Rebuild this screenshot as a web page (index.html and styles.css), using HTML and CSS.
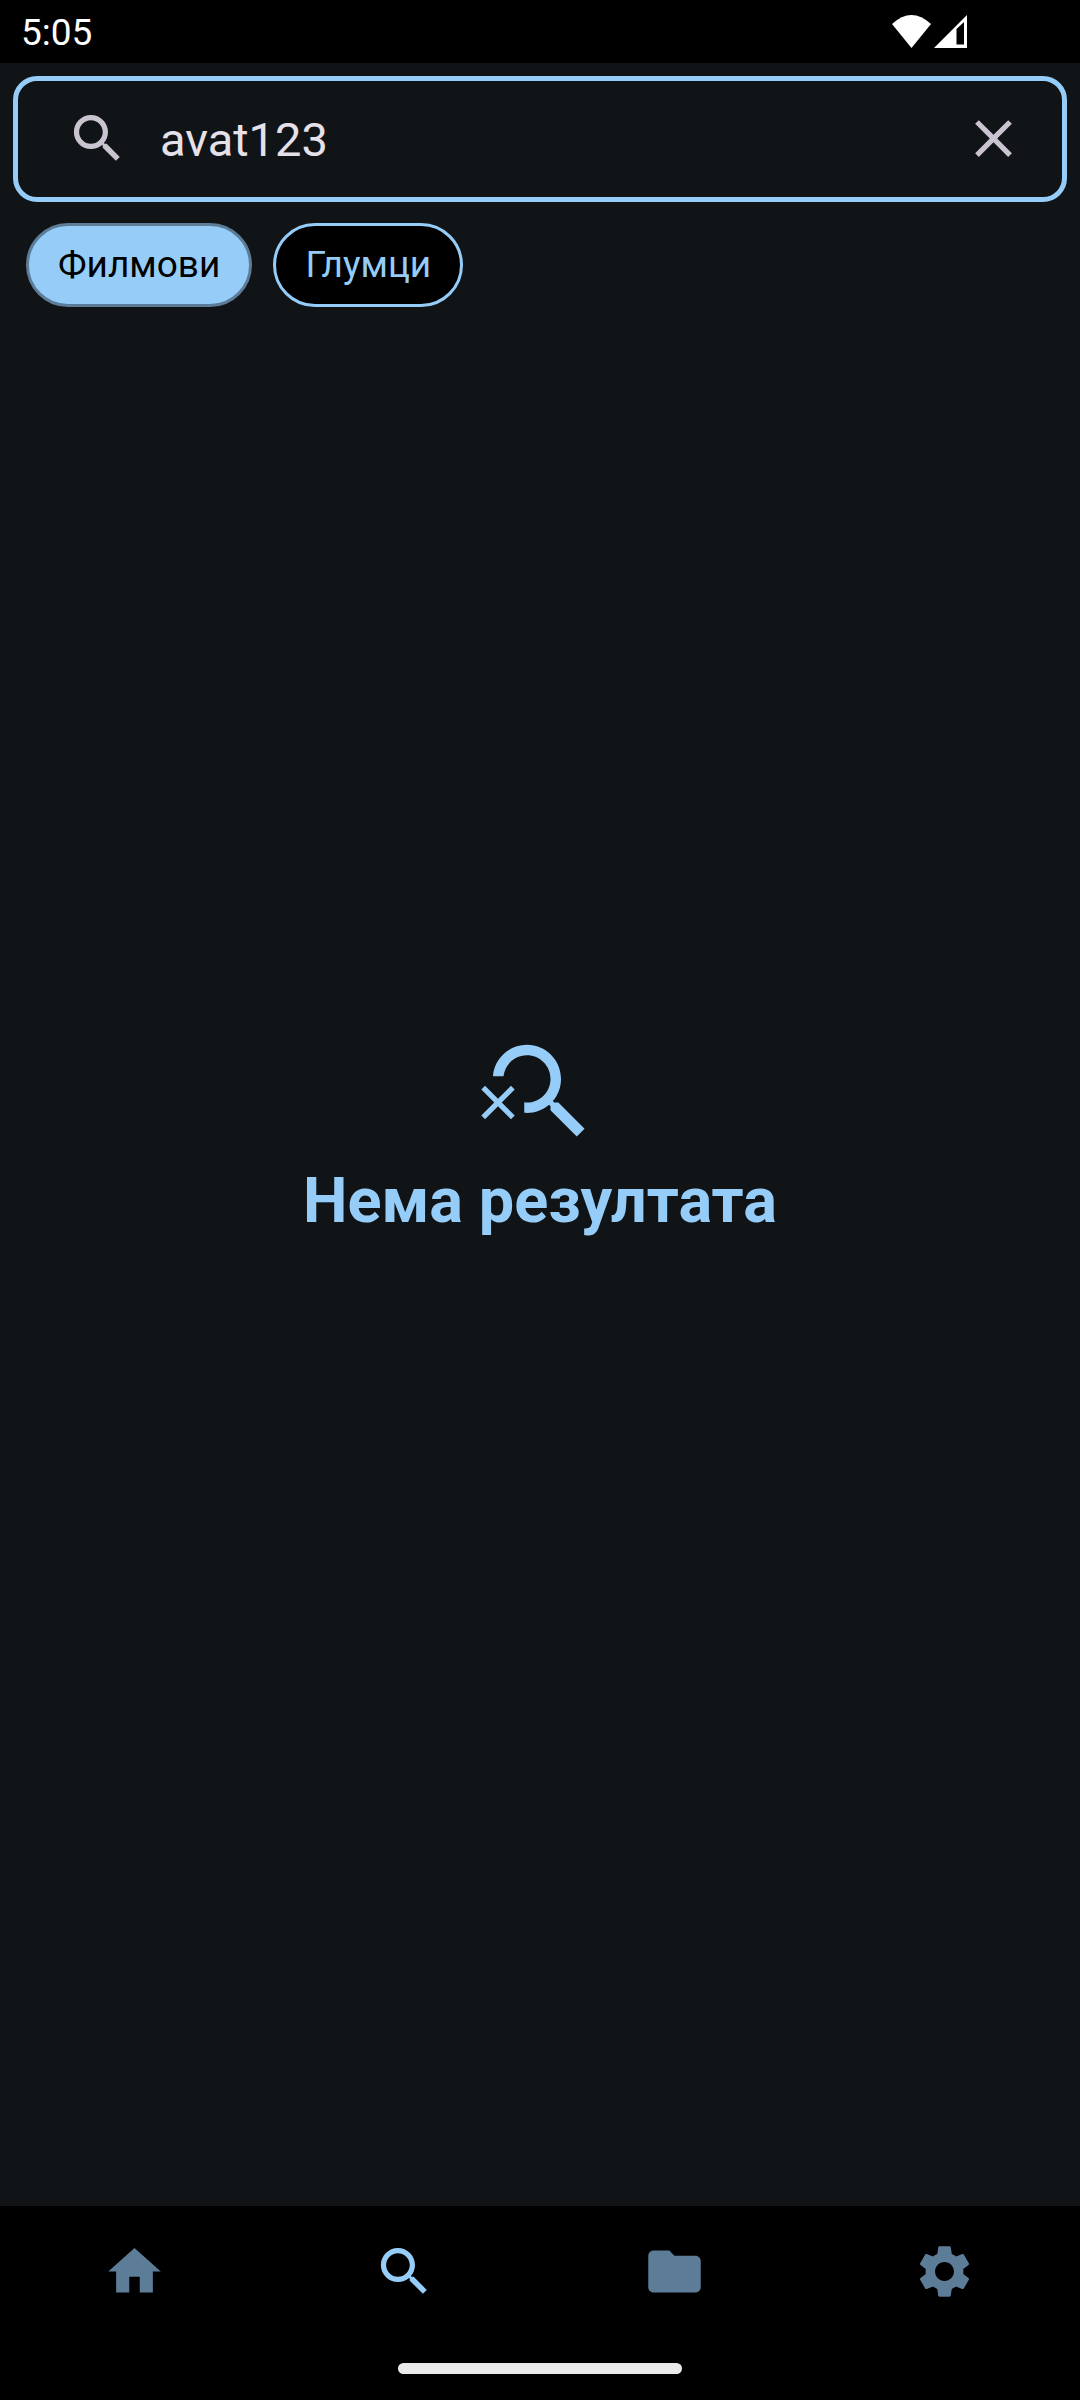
FILE: index.html
```html
<!DOCTYPE html>
<html lang="sr">
<head>
<meta charset="utf-8">
<meta name="viewport" content="width=device-width, initial-scale=1">
<title>Претрага</title>
<link rel="stylesheet" href="styles.css">
</head>
<body>
<div class="app">
  <header class="status">
    <time class="clock">5:05</time>
    <div class="signals">
      <svg class="wifi" viewBox="0 0 39 33" aria-hidden="true"><path d="M0 9Q19.500-9 39 9L19.500 33z"/></svg>
      <svg class="cell" viewBox="0 0 33 33" aria-hidden="true"><path fill-rule="evenodd" d="M33 0v33H0zM22.500 14v15.500H30V7z"/></svg>
    </div>
  </header>

  <main class="content">
    <section class="finder">
      <form class="search" role="search">
        <label class="search-label" for="query">
          <svg class="icon" viewBox="0 0 24 24" role="img" aria-label="Претрага"><path d="M15.500 14h-.79l-.28-.27C15.410 12.590 16 11.110 16 9.500 16 5.910 13.090 3 9.500 3S3 5.910 3 9.500 5.910 16 9.500 16c1.610 0 3.090-.59 4.230-1.570l.27.28v.79l5 4.990L20.490 19l-4.990-5zm-6 0C7.010 14 5 11.990 5 9.500S7.010 5 9.500 5 14 7.010 14 9.500 11.990 14 9.500 14z"/></svg>
        </label>
        <input class="query" id="query" type="text" value="avat123">
        <button class="clear" type="reset" aria-label="Обриши">
          <svg class="icon" viewBox="0 0 24 24" aria-hidden="true"><path d="M19 6.410 17.590 5 12 10.590 6.410 5 5 6.410 10.590 12 5 17.590 6.410 19 12 13.410 17.590 19 19 17.590 13.410 12z"/></svg>
        </button>
      </form>
      <div class="chips">
        <button class="chip chip-selected" type="button" aria-pressed="true">Филмови</button>
        <button class="chip" type="button" aria-pressed="false">Глумци</button>
      </div>
    </section>

    <section class="empty">
      <svg class="empty-icon" viewBox="0 0 24 24" aria-hidden="true"><path d="M15.500 14h-.79l-.28-.27C15.410 12.590 16 11.110 16 9.500 16 5.910 13.090 3 9.500 3 6.080 3 3.280 5.640 3.030 9h2.020C5.300 6.750 7.180 5 9.500 5 11.990 5 14 7.010 14 9.500S11.990 14 9.500 14c-.17 0-.33-.03-.5-.05v2.020c.17.02.33.03.5.03 1.610 0 3.090-.59 4.230-1.570l.27.28v.79l5 4.990L20.490 19l-4.990-5z"/><path d="M6.470 10.820 4 13.290l-2.470-2.470-.71.71L3.290 14 .82 16.470l.71.71L4 14.710l2.470 2.470.71-.71L4.710 14l2.470-2.470z"/></svg>
      <h1 class="empty-title">Нема резултата</h1>
    </section>
  </main>

  <footer class="bottom">
    <nav class="tabs">
      <a class="tab" href="#home" aria-label="Почетна"><svg class="icon" viewBox="0 0 24 24" aria-hidden="true"><path d="M10 20v-6h4v6h5v-8h3L12 3 2 12h3v8z"/></svg></a>
      <a class="tab tab-active" href="#search" aria-label="Претрага" aria-current="page"><svg class="icon" viewBox="0 0 24 24" aria-hidden="true"><path d="M15.500 14h-.79l-.28-.27C15.410 12.590 16 11.110 16 9.500 16 5.910 13.090 3 9.500 3S3 5.910 3 9.500 5.910 16 9.500 16c1.610 0 3.090-.59 4.230-1.570l.27.28v.79l5 4.990L20.490 19l-4.990-5zm-6 0C7.010 14 5 11.990 5 9.500S7.010 5 9.500 5 14 7.010 14 9.500 11.990 14 9.500 14z"/></svg></a>
      <a class="tab" href="#library" aria-label="Колекција"><svg class="icon" viewBox="0 0 24 24" aria-hidden="true"><path d="M10 4H4c-1.100 0-1.990.9-1.990 2L2 18c0 1.100.9 2 2 2h16c1.100 0 2-.9 2-2V8c0-1.100-.9-2-2-2h-8l-2-2z"/></svg></a>
      <a class="tab" href="#settings" aria-label="Подешавања"><svg class="icon" viewBox="0 0 24 24" aria-hidden="true"><path d="M19.140 12.940c.04-.3.06-.61.06-.94 0-.32-.02-.64-.07-.94l2.030-1.580c.18-.14.23-.41.12-.61l-1.920-3.320c-.12-.22-.37-.29-.59-.22l-2.390.96c-.5-.38-1.030-.7-1.620-.94L14.400 2.810c-.04-.24-.24-.41-.48-.41h-3.840c-.24 0-.43.17-.47.41L9.250 5.350c-.59.24-1.130.57-1.620.94l-2.390-.96c-.22-.08-.47 0-.59.22L2.740 8.870c-.12.21-.08.47.12.61l2.030 1.580c-.05.3-.09.63-.09.94s.02.64.07.94l-2.030 1.580c-.18.14-.23.41-.12.61l1.920 3.320c.12.22.37.29.59.22l2.390-.96c.5.38 1.030.7 1.620.94l.36 2.540c.05.24.24.41.48.41h3.840c.24 0 .44-.17.47-.41l.36-2.540c.59-.24 1.130-.56 1.620-.94l2.390.96c.22.08.47 0 .59-.22l1.920-3.320c.12-.22.07-.47-.12-.61l-2.010-1.580zM12 15.600c-1.980 0-3.600-1.620-3.600-3.600s1.620-3.600 3.600-3.600 3.600 1.620 3.600 3.600-1.620 3.600-3.600 3.600z"/></svg></a>
    </nav>
    <div class="handle"></div>
  </footer>
</div>
</body>
</html>
```
FILE: styles.css
```css
:root {
  --accent: #96cdf8;
  --muted: #5d7c97;
  --surface: #111417;
}

* {
  box-sizing: border-box;
}

body {
  margin: 0;
  background: #000;
  font-family: Roboto, "Noto Sans", sans-serif;
}

svg {
  display: block;
  fill: currentColor;
}

.app {
  display: flex;
  flex-direction: column;
  min-height: 100vh;
}

.status {
  display: flex;
  align-items: center;
  justify-content: space-between;
  height: 63px;
  padding: 0 113px 0 21px;
  color: #fff;
}

.clock {
  padding-top: 3px;
  font-size: 37px;
  line-height: 44px;
}

.signals {
  display: flex;
  gap: 3px;
}

.wifi {
  width: 39px;
  height: 33px;
}

.cell {
  width: 33px;
  height: 33px;
}

.content {
  display: grid;
  flex: 1;
  background: var(--surface);
}

/* The controls and the empty state share one cell, so the message centres on the whole screen. */
.finder,
.empty {
  grid-area: 1 / 1;
}

.finder {
  align-self: start;
  padding: 13px;
  z-index: 1;
}

.search {
  display: flex;
  align-items: center;
  height: 126px;
  padding: 0 37px 2px 48px;
  border: 5px solid var(--accent);
  border-radius: 24px;
  color: #cac4d0;
}

.icon {
  width: 63px;
  height: 63px;
}

.query {
  flex: 1;
  min-width: 0;
  padding: 3px 31px 0;
  border: 0;
  outline: 0;
  background: none;
  color: #e6e0e9;
  font: inherit;
  font-size: 47px;
  line-height: 60px;
}

.clear {
  padding: 0;
  border: 0;
  background: none;
  color: inherit;
}

.chips {
  display: flex;
  gap: 21px;
  padding: 21px 13px 0;
}

.chip {
  height: 84px;
  padding: 0 29px;
  border: 3px solid var(--accent);
  border-radius: 42px;
  background: #000;
  color: var(--accent);
  font: inherit;
  font-size: 37px;
  line-height: 48px;
}

.chip-selected {
  border-color: var(--muted);
  background: var(--accent);
  color: #000;
}

.empty {
  align-self: center;
  display: flex;
  flex-direction: column;
  align-items: center;
  gap: 4px;
  padding-top: 2px;
  color: var(--accent);
}

.empty-icon {
  width: 126px;
  height: 126px;
}

.empty-title {
  margin: 0;
  font-size: 63px;
  font-weight: 700;
  line-height: 84px;
}

.bottom {
  display: flex;
  flex-direction: column;
  align-items: center;
  gap: 28px;
  padding-bottom: 26px;
}

.tabs {
  display: grid;
  grid-template-columns: repeat(4, 1fr);
  width: 100%;
}

.tab {
  display: flex;
  justify-content: center;
  padding: 34px 1px 32px 0;
  color: var(--muted);
}

.tab-active {
  color: var(--accent);
}

.handle {
  width: 284px;
  height: 11px;
  border-radius: 6px;
  background: #ebebeb;
}
```
